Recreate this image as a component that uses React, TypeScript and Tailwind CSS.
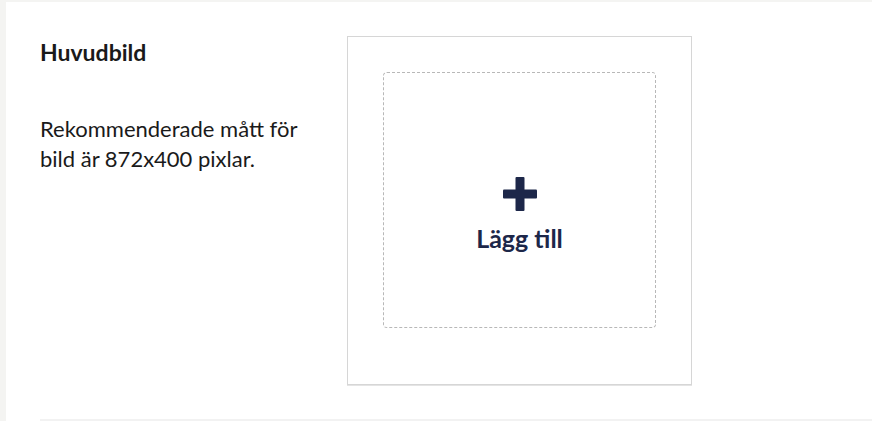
import React from 'react';

const PlusIcon = () => (
  <svg width="34" height="34" viewBox="0 0 34 34" fill="#1d2749">
    <rect x="12.5" y="0" width="9" height="34" rx="1" />
    <rect x="0" y="12.5" width="34" height="9" rx="1" />
  </svg>
);

export default function App() {
  return (
    <div className="w-full h-[421px] bg-[#f4f4f2] pl-[6px] pt-[2px] overflow-hidden" style={{ fontFamily: 'Lato, "Noto Sans", sans-serif' }}>
      <div className="bg-white h-[419px] pl-[34px]">
        <div className="h-full border-b-2 border-[#f2f2f2] flex pt-[34px]">
          <div className="w-[307px] pt-[2px] text-[#1a1a1a]">
            <h2 className="text-[23px] font-bold leading-[28px]">Huvudbild</h2>
            <p className="mt-[48px] text-[22px] leading-[30px] w-[270px]">
              Rekommenderade mått för bild är 872x400 pixlar.
            </p>
          </div>
          <div className="w-[345px] h-[349px] border border-[#d6d6d6] shadow-[0_1px_0_#e4e4e4] pt-[35px] px-[35px] pb-[56px]">
            <button className="w-full h-full border border-dashed border-[#b8b8b8] rounded-[4px] flex flex-col items-center justify-center pt-[30px] text-[#1d2749]">
              <PlusIcon />
              <span className="mt-[12px] text-[25px] font-bold leading-[30px]">Lägg till</span>
            </button>
          </div>
        </div>
      </div>
    </div>
  );
}
